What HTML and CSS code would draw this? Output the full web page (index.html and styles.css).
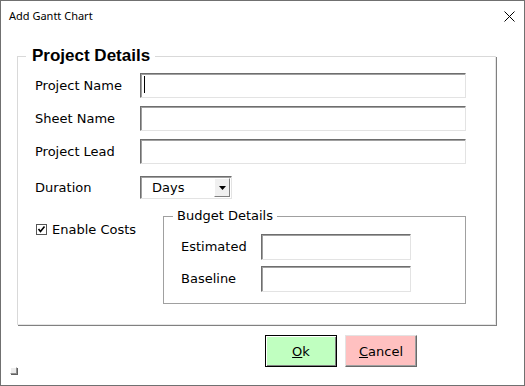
FILE: index.html
```html
<!DOCTYPE html>
<html lang="en">

<head>
    <meta charset="UTF-8">
    <meta name="viewport" content="width=device-width, initial-scale=1.0">
    <title>Add Gantt Chart</title>

    <link rel="stylesheet" href="styles.css">
</head>

<body>
    <div id="dialog">
        <div class="titlebar">
            <span class="title">Add Gantt Chart</span>
            <svg class="close" width="11" height="11" viewBox="0 0 11 11">
                <path d="M0.5 0.5 L10.5 10.5 M10.5 0.5 L0.5 10.5" stroke="#000" stroke-width="1" fill="none" />
            </svg>
        </div>

        <div class="content">
            <fieldset class="group main">
                <legend>Project Details</legend>

                <div class="row">
                    <label>Project Name</label>
                    <div class="field wide"><span class="caret"></span></div>
                </div>
                <div class="row">
                    <label>Sheet Name</label>
                    <div class="field wide"></div>
                </div>
                <div class="row">
                    <label>Project Lead</label>
                    <div class="field wide"></div>
                </div>
                <div class="row duration">
                    <label>Duration</label>
                    <div class="combo">
                        <span class="value">Days</span>
                        <span class="drop">
                            <svg width="7" height="4" viewBox="0 0 7 4"><path d="M0 0 H7 L3.5 4 Z" fill="#000" /></svg>
                        </span>
                    </div>
                </div>

                <div class="costs">
                    <label class="check">
                        <svg class="box" width="11" height="11" viewBox="0 0 11 11">
                            <rect x="0.5" y="0.5" width="10" height="10" fill="#fff" stroke="#555" />
                            <path d="M2.5 5 L4.5 7.5 L8.5 2.5" stroke="#000" stroke-width="1.6" fill="none" />
                        </svg>
                        Enable Costs
                    </label>

                    <fieldset class="group budget">
                        <legend>Budget Details</legend>
                        <div class="row">
                            <label>Estimated</label>
                            <div class="field small"></div>
                        </div>
                        <div class="row">
                            <label>Baseline</label>
                            <div class="field small"></div>
                        </div>
                    </fieldset>
                </div>
            </fieldset>

            <div class="buttons">
                <button class="btn ok"><u>O</u>k</button>
                <button class="btn cancel"><u>C</u>ancel</button>
            </div>
        </div>

        <span class="grip"></span>
    </div>
</body>

</html>
```

FILE: styles.css
```css
* {
    padding: 0;
    margin: 0;
    box-sizing: border-box;
}

body {
    background: #fff;
    font-family: "DejaVu Sans", Verdana, sans-serif;
    font-size: 13px;
    color: #000;
}

#dialog {
    position: relative;
    width: 525px;
    height: 386px;
    border: 1px solid #707070;
    background: #fff;
}

.titlebar {
    display: flex;
    align-items: center;
    justify-content: space-between;
    height: 30px;
    padding: 0 9px 0 8px;
}

.title {
    font-family: "Noto Sans", sans-serif;
    font-size: 11px;
    line-height: 30px;
}

.close {
    display: block;
}

.content {
    padding: 15px 0 0 16px;
}

/* group frames */
.group {
    min-width: 0;
}

.group legend {
    line-height: 16px;
}

.main {
    width: 479px;
    border: 1px solid #d9d9d9;
    border-right-color: #e6e6e6;
    border-bottom-color: #e6e6e6;
    box-shadow: 1px 1px 0 #808080;
    padding: 7px 10px 20px 17px;
    display: flex;
    flex-direction: column;
    gap: 8px;
}

.main > legend {
    font-family: "Liberation Sans", Arial, sans-serif;
    font-weight: bold;
    font-size: 17px;
    line-height: 20px;
    margin-left: -9px;
    padding: 0 5px 0 6px;
}

.row {
    display: flex;
    align-items: center;
}

.row label {
    width: 105px;
    flex: none;
    margin-top: -1px;
}

.field {
    position: relative;
    height: 25px;
    border: 1px solid #e3e3e3;
    border-top-color: #6e6e6e;
    border-left-color: #6e6e6e;
    box-shadow: inset 1px 1px 0 #a0a0a0;
    background: #fff;
}

.wide {
    width: 326px;
}

.caret {
    position: absolute;
    left: 3px;
    top: 2px;
    width: 1px;
    height: 17px;
    background: #000;
}

.duration {
    margin-top: 4px;
}

.combo {
    display: flex;
    align-items: center;
    justify-content: space-between;
    width: 92px;
    height: 23px;
    border: 1px solid #e3e3e3;
    border-top-color: #6e6e6e;
    border-left-color: #6e6e6e;
    box-shadow: inset 1px 1px 0 #a0a0a0;
    padding: 1px 1px 1px 11px;
}

.drop {
    display: flex;
    align-items: center;
    justify-content: center;
    width: 16px;
    height: 19px;
    background: #f0f0f0;
    border: 1px solid #fff;
    border-right-color: #808080;
    border-bottom-color: #808080;
}

/* costs */
.costs {
    display: flex;
    align-items: flex-start;
    margin-top: 1px;
}

.check {
    display: flex;
    align-items: center;
    gap: 5px;
    width: 128px;
    margin-top: 14px;
    padding-left: 1px;
}

.box {
    display: block;
    flex: none;
}

.budget {
    width: 303px;
    border: 1px solid #a0a0a0;
    padding: 10px 10px 11px 17px;
    display: flex;
    flex-direction: column;
    gap: 6px;
}

.budget legend {
    margin-left: -8px;
    padding: 0 4px;
}

.budget .row label {
    width: 80px;
}

.small {
    width: 150px;
    height: 26px;
}

/* buttons */
.buttons {
    display: flex;
    gap: 8px;
    margin-top: 10px;
    padding-left: 248px;
}

.btn {
    width: 72px;
    height: 32px;
    font-family: "DejaVu Sans", Verdana, sans-serif;
    font-size: 13px;
    color: #000;
    cursor: pointer;
}

.ok {
    background: #c0ffc0;
    border: 1px solid #000;
    box-shadow: inset 1px 1px 0 #fff, inset -1px -1px 0 #808080;
}

.cancel {
    background: #ffc0c0;
    border: 1px solid #e3e3e3;
    border-right-color: #696969;
    border-bottom-color: #696969;
    box-shadow: inset -1px -1px 0 #a0a0a0;
}

.grip {
    position: absolute;
    left: 9px;
    bottom: 11px;
    width: 7px;
    height: 7px;
    background: #ececec;
    border: 1px solid #fff;
    border-right-color: #909090;
    border-bottom-color: #909090;
    box-shadow: 1px 1px 0 #606060;
}
```
